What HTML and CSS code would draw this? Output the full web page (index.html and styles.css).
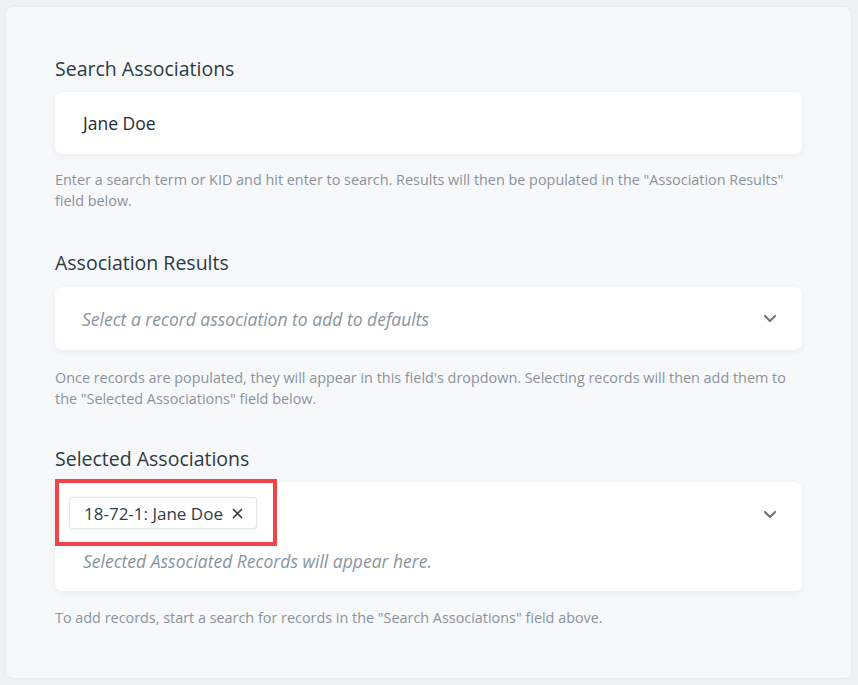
FILE: index.html
```html
<!DOCTYPE html>
<html>
<head>
<meta charset="utf-8">
<link rel="stylesheet" href="styles.css">
</head>
<body>
<div class="panel">
  <div class="field">
    <div class="label">Search Associations</div>
    <div class="box input-box">Jane Doe</div>
    <div class="help">Enter a search term or KID and hit enter to search. Results will then be populated in the "Association Results" field below.</div>
  </div>
  <div class="field field-results">
    <div class="label">Association Results</div>
    <div class="box select-box">
      <span class="placeholder">Select a record association to add to defaults</span>
      <svg class="chev" width="14" height="9" viewBox="0 0 14 9"><path d="M2 2 L7 7 L12 2" fill="none" stroke="#6b7682" stroke-width="2.2" stroke-linecap="round" stroke-linejoin="round"/></svg>
    </div>
    <div class="help">Once records are populated, they will appear in this field's dropdown. Selecting records will then add them to the "Selected Associations" field below.</div>
  </div>
  <div class="field field-selected">
    <div class="label">Selected Associations</div>
    <div class="box multi-box">
      <div class="multi-top">
        <div class="highlight">
          <span class="tag">18-72-1: Jane Doe <svg class="x" width="11" height="11" viewBox="0 0 11 11"><path d="M1.5 1.5 L9.5 9.5 M9.5 1.5 L1.5 9.5" stroke="#2f3d48" stroke-width="1.7" stroke-linecap="round"/></svg></span>
        </div>
        <svg class="chev" width="14" height="9" viewBox="0 0 14 9"><path d="M2 2 L7 7 L12 2" fill="none" stroke="#6b7682" stroke-width="2.2" stroke-linecap="round" stroke-linejoin="round"/></svg>
      </div>
      <div class="placeholder multi-ph">Selected Associated Records will appear here.</div>
    </div>
    <div class="help">To add records, start a search for records in the "Search Associations" field above.</div>
  </div>
</div>
</body>
</html>
```
FILE: styles.css
```css
html, body {
  margin: 0;
  padding: 0;
  background: #eff0f2;
}
body {
  padding: 6px 6px 6px 5px;
  font-family: "Open Sans", "Noto Sans", sans-serif;
  color: #2b3a45;
}
.panel {
  background: #f7f8fa;
  border: 1px solid #e8eaed;
  border-radius: 8px;
  height: 673px;
  box-sizing: border-box;
  padding: 50px 49px 0 49px;
}
.label {
  font-size: 19.5px;
  line-height: 24px;
  color: #2b3a45;
  margin-bottom: 11px;
}
.field-results {
  margin-top: 40px;
}
.field-results .label {
  margin-bottom: 12px;
}
.field-results .help {
  margin-top: 17px;
}
.field-selected {
  margin-top: 38px;
}
.field-selected .help {
  margin-top: 16px;
}
.box {
  background: #fff;
  border-radius: 7px;
  box-shadow: 0 2px 6px rgba(30, 40, 60, 0.06);
}
.input-box {
  height: 62px;
  padding: 0 28px;
  display: flex;
  align-items: center;
  font-size: 17.5px;
  color: #1f2a33;
}
.select-box {
  height: 63px;
  padding: 0 25px 0 27px;
  display: flex;
  align-items: center;
  justify-content: space-between;
}
.placeholder {
  font-style: italic;
  font-size: 17.5px;
  color: #8a949d;
}
.help {
  font-size: 14.4px;
  line-height: 21px;
  color: #8a939b;
  margin-top: 15px;
}
.multi-box {
  height: 109px;
  padding: 0 25px 0 0;
  box-sizing: border-box;
}
.multi-top {
  display: flex;
  align-items: center;
  justify-content: space-between;
}
.highlight {
  border: 4px solid #f5434a;
  margin-top: -3px;
  padding: 14px 16px 13px 10px;
  display: flex;
  align-items: center;
}
.tag {
  display: inline-flex;
  align-items: center;
  gap: 9px;
  height: 30px;
  padding: 0 13px 0 14px;
  border: 1px solid #e3e6ea;
  border-radius: 3px;
  box-shadow: 0 1px 3px rgba(30, 40, 60, 0.06);
  font-size: 17px;
  color: #2f3d48;
  background: #fff;
}
.multi-ph {
  padding-left: 28px;
  margin-top: 3px;
}
.chev {
  display: block;
}
```
